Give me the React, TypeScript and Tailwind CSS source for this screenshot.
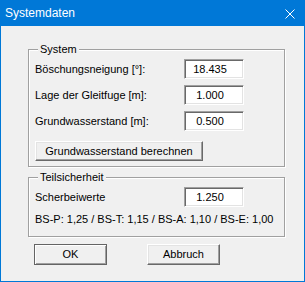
import React from 'react';

const sunken =
  'h-[20px] w-[60px] bg-white border border-t-[#a0a0a0] border-l-[#a0a0a0] border-b-white border-r-white shadow-[inset_1px_1px_0_#696969,inset_-1px_-1px_0_#e3e3e3] flex items-center justify-center pr-[8px] text-black';

const raised =
  'bg-[#f0f0f0] border border-t-white border-l-white border-b-[#696969] border-r-[#696969] shadow-[inset_-1px_-1px_0_#a0a0a0,inset_1px_1px_0_#e3e3e3] flex items-center justify-center text-black';

function Field({ label, value }: { label: string; value: string }) {
  return (
    <>
      <span className="leading-[13px]">{label}</span>
      <div className={sunken}>{value}</div>
    </>
  );
}

export default function App() {
  return (
    <div className="w-[305px] h-[282px] flex flex-col bg-[#f0f0f0] border border-t-0 border-[#0078d7] font-['Liberation_Sans',Arial,sans-serif] text-[11px] text-black select-none">
      {/* title bar */}
      <div className="h-[26px] shrink-0 bg-[#0078d7] flex items-center justify-between pl-[4px] pr-[9px] text-white text-[12px]">
        <span>Systemdaten</span>
        <svg width="10" height="10" viewBox="0 0 10 10" className="mt-[1px]">
          <path d="M0.5 0.5 L9.5 9.5 M9.5 0.5 L0.5 9.5" stroke="#fff" strokeWidth="1" />
        </svg>
      </div>

      <div className="flex flex-col pt-[17px]">
        {/* System */}
        <fieldset className="ml-[27px] w-[257px] border border-[#a0a0a0] shadow-[1px_1px_0_#fff,inset_1px_1px_0_#fff] pl-[6px] pt-[3px] pb-[5px]">
          <legend className="ml-[3px] px-[2px] leading-[13px] bg-[#f0f0f0]">System</legend>
          <div className="grid grid-cols-[149px_60px] gap-y-[6px] items-center">
            <Field label="Böschungsneigung [°]:" value="18.435" />
            <Field label="Lage der Gleitfuge [m]:" value="1.000" />
            <Field label="Grundwasserstand [m]:" value="0.500" />
          </div>
          <button className={`${raised} mt-[10px] w-[168px] h-[20px]`}>Grundwasserstand berechnen</button>
        </fieldset>

        {/* Teilsicherheit */}
        <fieldset className="ml-[27px] mt-[4px] w-[257px] border border-[#a0a0a0] shadow-[1px_1px_0_#fff,inset_1px_1px_0_#fff] pl-[6px] pt-[3px] pb-[10px]">
          <legend className="ml-[3px] px-[2px] leading-[13px] bg-[#f0f0f0]">Teilsicherheit</legend>
          <div className="grid grid-cols-[149px_60px] items-center">
            <Field label="Scherbeiwerte" value="1.250" />
          </div>
          <p className="mt-[6px] leading-[13px]">BS-P: 1,25 / BS-T: 1,15 / BS-A: 1,10 / BS-E: 1,00</p>
        </fieldset>

        {/* buttons */}
        <div className="flex gap-[40px] ml-[33px] mt-[7px]">
          <button className="w-[73px] h-[21px] bg-[#f0f0f0] border border-[#646464] shadow-[inset_1px_1px_0_#fff,inset_-1px_-1px_0_#a0a0a0] flex items-center justify-center">
            OK
          </button>
          <button className={`${raised} w-[73px] h-[21px]`}>Abbruch</button>
        </div>
      </div>
    </div>
  );
}
